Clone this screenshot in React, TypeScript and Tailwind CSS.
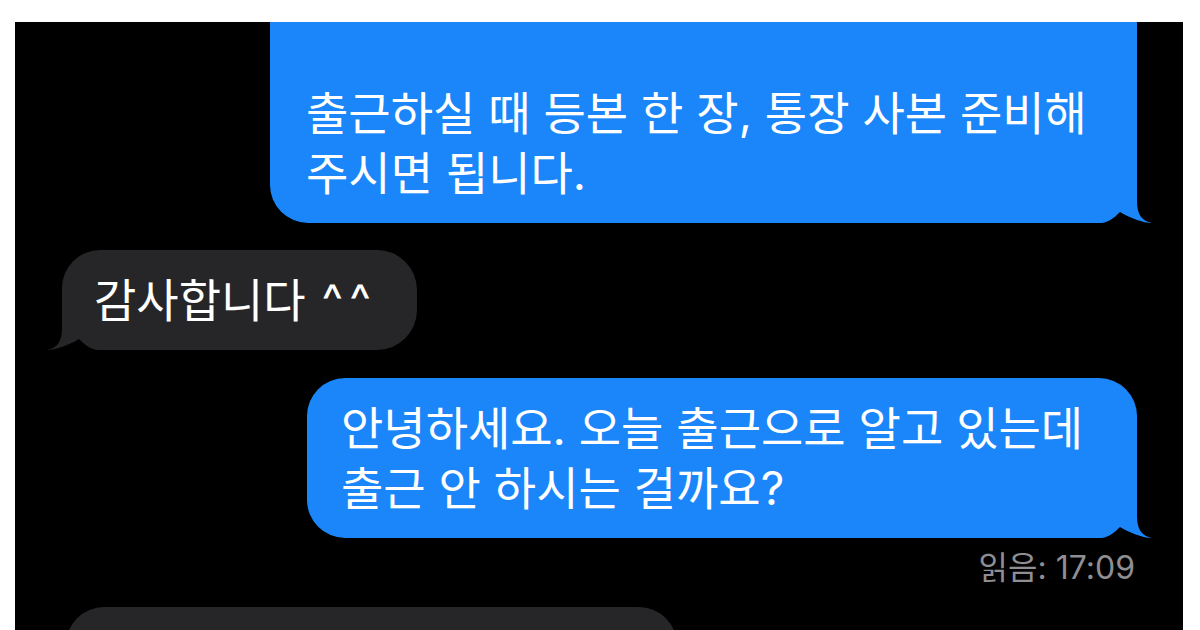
import React from "react";

const BLUE = "#1a86fa";
const GRAY = "#262629";

function Tail({ color, side }: { color: string; side: "right" | "left" }) {
  const pos = side === "right" ? "right-[-15px]" : "left-[-15px]";
  return (
    <svg
      className={`absolute bottom-0 ${pos}`}
      width="50"
      height="34"
      viewBox="0 0 50 34"
    >
      <g transform={side === "left" ? "translate(50,0) scale(-1,1)" : undefined}>
        <rect x="0" y="0" width="50" height="34" fill="#000" />
        <path
          d="M0,0 L35,0 L35,12 C35,26 40,32 50,34 C41,34 28,29 18,23 C13,28 7,33 0,34 Z"
          fill={color}
        />
      </g>
    </svg>
  );
}

export default function App() {
  return (
    <div className="w-[1200px] h-[630px] bg-white overflow-hidden font-['Inter','Noto_Sans_CJK_KR',sans-serif]">
      <div className="ml-[15px] mt-[22px] w-[1168px] h-[608px] bg-black overflow-hidden flex flex-col pl-[47px] pr-[46px]">
        {/* Bubble 1 */}
        <div
          className="relative self-end shrink-0 w-[867px] rounded-bl-[38px] pt-[61px] pb-[20px] pl-[36px] text-white text-[46px] leading-[60px] whitespace-nowrap"
          style={{ backgroundColor: BLUE }}
        >
          출근하실 때 등본 한 장, 통장 사본 준비해
          <br />
          주시면 됩니다.
          <Tail color={BLUE} side="right" />
        </div>

        {/* Bubble 2 */}
        <div
          className="relative self-start shrink-0 mt-[27px] w-[355px] h-[100px] rounded-tl-[38px] rounded-tr-[40px] rounded-br-[40px] py-[20px] pl-[32px] text-white text-[46px] leading-[60px] whitespace-nowrap"
          style={{ backgroundColor: GRAY }}
        >
          감사합니다 <span className="ml-[3px] tracking-[6px]">^^</span>
          <Tail color={GRAY} side="left" />
        </div>

        {/* Bubble 3 */}
        <div
          className="relative self-end shrink-0 mt-[28px] w-[830px] rounded-tl-[38px] rounded-tr-[38px] rounded-bl-[38px] py-[20px] pl-[34px] text-white text-[46px] leading-[60px] whitespace-nowrap"
          style={{ backgroundColor: BLUE }}
        >
          안녕하세요. 오늘 출근으로 알고 있는데
          <br />
          출근 안 하시는 걸까요?
          <Tail color={BLUE} side="right" />
        </div>

        {/* Read receipt */}
        <div className="self-end shrink-0 mt-[11px] pr-[2px] text-[32px] leading-[38px] text-[#8e8e93] whitespace-nowrap">
          읽음: 17:09
        </div>

        {/* Bubble 4 (cut off) */}
        <div
          className="self-start shrink-0 mt-[20px] ml-[4px] w-[611px] h-[100px] rounded-[38px]"
          style={{ backgroundColor: GRAY }}
        />
      </div>
    </div>
  );
}
